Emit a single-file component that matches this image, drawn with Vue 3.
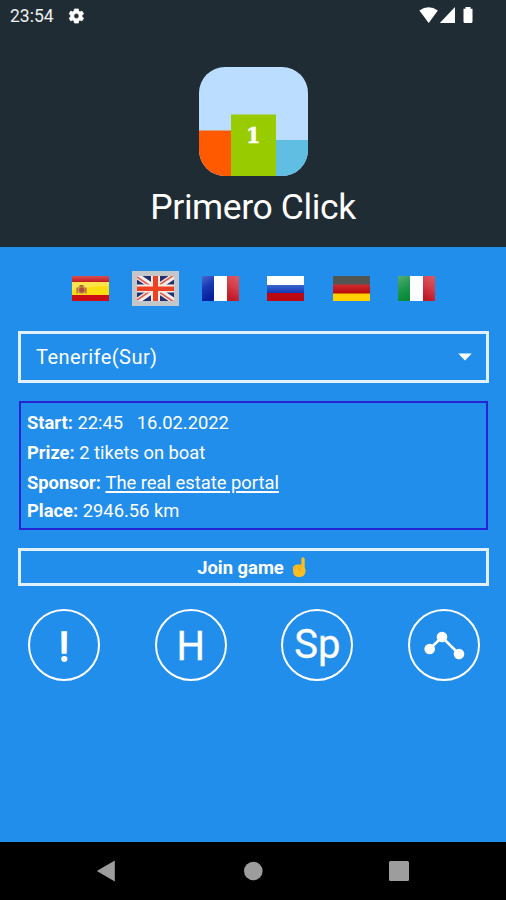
<script setup>
const details = [
  { label: 'Start:', value: '22:45\u00a0\u00a0 16.02.2022' },
  { label: 'Prize:', value: '2 tikets on boat' },
  { label: 'Sponsor:', value: 'The real estate portal', link: true },
  { label: 'Place:', value: '2946.56 km' }
]
</script>

<template>
  <div class="screen">
    <header class="header">
      <div class="status">
        <span class="time">23:54</span>
        <svg class="gear" viewBox="2 2 20 20"><path fill="#fff" stroke="#fff" stroke-width=".9" fill-rule="evenodd" d="M19.400 13a7.500 7.500 0 0 0 0-2l2.100-1.600-2-3.500-2.500 1a7 7 0 0 0-1.700-1L15 3.200h-5l-.4 2.700a7 7 0 0 0-1.700 1l-2.500-1-2 3.500L5.500 11a7.500 7.500 0 0 0 0 2l-2.100 1.600 2 3.500 2.500-1a7 7 0 0 0 1.700 1l.4 2.700h5l.3-2.700a7 7 0 0 0 1.700-1l2.500 1 2-3.500zM12.500 8.700a3.300 3.300 0 1 1 0 6.600 3.300 3.300 0 0 1 0-6.600z" /></svg>
        <svg class="signals" width="56" height="18" viewBox="0 0 56 18">
          <g fill="#fff">
            <path d="M.4 3.500Q9.500-3 18.900 3.500L9.700 16z" />
            <path d="M20.800 16L36 0V16z" />
            <path d="M44.500 1.800h2V0h5v1.800h2V14.500q0 1.500-1.500 1.500h-6q-1.500 0-1.500-1.500z" />
          </g>
        </svg>
      </div>
      <svg class="logo" width="109" height="109" viewBox="0 0 109 109">
        <defs><clipPath id="logo-shape"><rect width="109" height="109" rx="26" /></clipPath></defs>
        <g clip-path="url(#logo-shape)">
          <rect width="109" height="109" fill="#bbddff" />
          <path fill="#ff5a00" d="M0 63.500h33v46H0z" />
          <path fill="#61bee3" d="M76 73h33v36H76z" />
          <path fill="#99cc00" d="M32 47.500h45V109H32z" />
        </g>
        <text class="logo-number" x="54.300" y="76" text-anchor="middle">1</text>
      </svg>
      <h1 class="title">Primero Click</h1>
    </header>

    <main class="content">
      <nav class="flags">
        <span class="flag">
          <svg viewBox="0 0 37 25">
            <defs><linearGradient id="es-red" x2="0" y2="1"><stop stop-color="#d8504f" /><stop offset="1" stop-color="#c31a20" /></linearGradient></defs>
            <path fill="#cc0d14" d="M0 0h37v25H0z" /><path fill="url(#es-red)" d="M0 0h37v6H0z" /><path fill="#fbdd10" d="M0 6h37v13H0z" />
            <path fill="#fff" opacity=".25" d="M0 6h37v4Q20 10 0 14z" />
            <ellipse cx="9.500" cy="13.800" rx="4.800" ry="4" fill="#d59a4a" /><circle cx="9.800" cy="14" r="2.700" fill="#a9503f" /><path fill="#ab6535" d="M7.500 9h4v1.800h-4zM4.500 11.500h1.200v6H4.500zM13.300 11.500h1.200v6h-1.200z" />
          </svg>
        </span>
        <span class="flag selected">
          <svg viewBox="0 0 37 25">
            <path fill="#24306d" d="M0 0h37v25H0z" />
            <path stroke="#f6eeee" stroke-width="6" d="M0 0l37 25M37 0L0 25" />
            <path stroke="#e4604d" stroke-width="1.800" d="M0 1l37 25M37-1L0 24" />
            <path fill="#fae9e1" d="M14 0h9v25h-9zM0 8.500h37v8H0z" />
            <path fill="#ed4124" d="M16 0h5v25h-5zM0 10.500h37v4.500H0z" />
          </svg>
        </span>
        <span class="flag">
          <svg viewBox="0 0 37 25">
            <defs>
              <linearGradient id="fr-blue" x2=".3" y2="1"><stop stop-color="#4a68d0" /><stop offset=".5" stop-color="#1838b4" /><stop offset="1" stop-color="#061f9e" /></linearGradient>
              <linearGradient id="flag-red" x1="1" x2=".7" y2="1"><stop stop-color="#db5c66" /><stop offset=".55" stop-color="#d23c48" /><stop offset="1" stop-color="#c01a27" /></linearGradient>
            </defs>
            <path fill="#fff" d="M0 0h37v25H0z" /><path fill="url(#fr-blue)" d="M0 0h12v25H0z" /><path fill="url(#flag-red)" d="M25 0h12v25H25z" />
          </svg>
        </span>
        <span class="flag">
          <svg viewBox="0 0 37 25">
            <defs><linearGradient id="ru-blue" x2="0" y2="1"><stop stop-color="#3a65cc" /><stop offset="1" stop-color="#1239b4" /></linearGradient></defs>
            <path fill="#fff" d="M0 0h37v9H0z" /><path fill="url(#ru-blue)" d="M0 9h37v8H0z" /><path fill="#bb0710" d="M0 17h37v8H0z" />
          </svg>
        </span>
        <span class="flag">
          <svg viewBox="0 0 37 25">
            <defs><linearGradient id="de-red" x2="0" y2="1"><stop stop-color="#cc2c31" /><stop offset="1" stop-color="#b90609" /></linearGradient></defs>
            <path fill="#515653" d="M0 0h37v9H0z" /><path fill="url(#de-red)" d="M0 8.500h37v9.500H0z" /><path fill="#ffcf00" d="M0 17.500h37V25H0z" />
          </svg>
        </span>
        <span class="flag">
          <svg viewBox="0 0 37 25">
            <defs><linearGradient id="it-green" x2=".3" y2="1"><stop stop-color="#58aa73" /><stop offset=".5" stop-color="#249a51" /><stop offset="1" stop-color="#078b37" /></linearGradient></defs>
            <path fill="#fff" d="M0 0h37v25H0z" /><path fill="url(#it-green)" d="M0 0h12v25H0z" /><path fill="url(#flag-red)" d="M25 0h12v25H25z" />
          </svg>
        </span>
      </nav>

      <div class="select">
        <span>Tenerife(Sur)</span>
        <svg width="14" height="8" viewBox="0 0 14 8"><path fill="#fff" d="M.3.500h13.400L7 7.500z" /></svg>
      </div>

      <section class="info">
        <p v-for="row in details" :key="row.label" class="row">
          <b>{{ row.label }}</b>&nbsp;<span :class="{ link: row.link }">{{ row.value }}</span>
        </p>
      </section>

      <button class="join">
        <span>Join game</span>
        <svg width="16" height="21" viewBox="0 0 18 22" preserveAspectRatio="none">
          <path fill="#fbbd20" d="M10.500 2q0-1.700 1.900-1.700T14.300 2v9q1.200 2 .8 5-.8 5-7 5Q1.500 21 1.200 15.500V11Q1 9.200 3 8.800q1.200-1.300 3-.6 1.500-1 3 0l1.500-.6z" />
          <path fill="none" stroke="#e8a31d" stroke-width=".7" d="M4 9.500v3.200M7 9v3M10.500 8v3.500q0 1.500-3.500 1.500 3 .3 3.500 3" />
        </svg>
      </button>

      <div class="actions">
        <div class="circle bang">!</div>
        <div class="circle letter-h">H</div>
        <div class="circle sp">Sp</div>
        <div class="circle">
          <svg width="68" height="68" viewBox="0 0 68 68">
            <path fill="none" stroke="#fff" stroke-width="2.600" d="M19.700 38L32 26 49 43" />
            <g fill="#fff"><circle cx="19.700" cy="38" r="5.300" /><circle cx="32" cy="26" r="5.300" /><circle cx="49" cy="43" r="5.300" /></g>
          </svg>
        </div>
      </div>
    </main>

    <footer class="navbar">
      <svg width="20" height="22" viewBox="0 0 20 22"><path fill="#9d9d9d" d="M.8 11L18.800.500v21z" /></svg>
      <svg width="20" height="20" viewBox="0 0 20 20"><circle cx="10.300" cy="10" r="9.300" fill="#9d9d9d" /></svg>
      <svg width="20" height="20" viewBox="0 0 20 20"><rect width="20" height="20" rx="1.500" fill="#9d9d9d" /></svg>
    </footer>
  </div>
</template>

<style>
body { margin: 0; }
</style>

<style scoped>
.screen {
  box-sizing: border-box;
  width: 506px;
  height: 900px;
  display: flex;
  flex-direction: column;
  overflow: hidden;
  background: #228eeb;
  color: #fff;
  font-family: Roboto, "Liberation Sans", sans-serif;
}
svg { display: block; flex: none; }
.header {
  height: 246.500px;
  flex: none;
  background: #202c33;
  display: flex;
  flex-direction: column;
  align-items: center;
}
.status {
  box-sizing: border-box;
  width: 100%;
  height: 32px;
  padding: 0 31px 0 10px;
  display: flex;
  align-items: center;
}
.time { font-size: 17.500px; line-height: 32px; color: #eef0f1; }
.gear { width: 16px; height: 16px; margin-left: 14px; }
.signals { margin-left: auto; }
.logo { margin-top: 35px; }
.logo-number { font: bold 23px "DejaVu Serif Condensed", "DejaVu Serif", serif; font-stretch: condensed; fill: #fff; stroke: #fff; stroke-width: .5px; }
.title { margin: 10px 0 0; font-size: 35.500px; letter-spacing: -.4px; line-height: 42px; font-weight: 400; white-space: nowrap; }
.content {
  flex: 1;
  display: flex;
  flex-direction: column;
  padding: 24.500px 17px 0 18px;
}
.flags {
  display: flex;
  justify-content: space-between;
  padding: 0 48px;
  height: 35px;
}
.flag { box-sizing: border-box; width: 48px; height: 35px; padding: 5px 5.500px; }
.flag svg { width: 37px; height: 25px; }
.selected { width: 47px; padding: 5px; background: #c4c7ca; }
.select {
  box-sizing: border-box;
  height: 52px;
  margin-top: 25px;
  border: 3px solid #e2f0fd;
  padding: 0 14px 0 15px;
  display: flex;
  align-items: center;
  justify-content: space-between;
  font-size: 20px;
  letter-spacing: .45px;
}
.info {
  box-sizing: border-box;
  height: 129px;
  margin: 18px 1px 0;
  padding: 5px 6px;
  border: 2px solid #2424d3;
  display: grid;
  grid-template-rows: 30px 30px 28px 28px;
}
.row { margin: 0; font-size: 18.350px; line-height: 30px; white-space: nowrap; }
.link { text-decoration: underline; text-decoration-thickness: 1.500px; text-underline-offset: 2px; }
.join {
  box-sizing: border-box;
  height: 38px;
  margin-top: 18px;
  padding: 1px 2px 0 0;
  border: 3px solid #e2f0fd;
  background: transparent;
  color: #fff;
  font: bold 18.400px Roboto, sans-serif;
  display: flex;
  align-items: center;
  justify-content: center;
  gap: 8px;
}
.actions { display: flex; justify-content: space-between; padding: 0 9px 0 10px; margin-top: 23px; }
.circle {
  box-sizing: border-box;
  width: 72px;
  height: 72px;
  border: 2px solid #fff;
  border-radius: 50%;
  display: flex;
  align-items: center;
  justify-content: center;
  line-height: 66px;
}
.letter-h, .sp { font-size: 40px; -webkit-text-stroke: .3px #fff; }
.letter-h { padding-top: 3px; }
.sp { line-height: 68px; }
.bang { padding-top: 3px; font-size: 41px; -webkit-text-stroke: 1.600px #fff; }
.navbar {
  height: 58px;
  flex: none;
  background: #000;
  display: flex;
  align-items: center;
  justify-content: space-between;
  box-sizing: border-box;
  padding: 0 97px 0 96px;
}
</style>
